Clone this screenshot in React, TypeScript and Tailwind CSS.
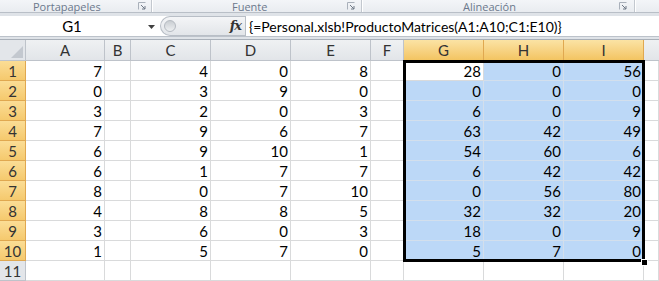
import React from 'react'

const rows: Array<{ a: number; c: number; d: number; e: number; g: number; h: number; i: number }> = [
  { a: 7, c: 4, d: 0, e: 8, g: 28, h: 0, i: 56 },
  { a: 0, c: 3, d: 9, e: 0, g: 0, h: 0, i: 0 },
  { a: 3, c: 2, d: 0, e: 3, g: 6, h: 0, i: 9 },
  { a: 7, c: 9, d: 6, e: 7, g: 63, h: 42, i: 49 },
  { a: 6, c: 9, d: 10, e: 1, g: 54, h: 60, i: 6 },
  { a: 6, c: 1, d: 7, e: 7, g: 6, h: 42, i: 42 },
  { a: 8, c: 0, d: 7, e: 10, g: 0, h: 56, i: 80 },
  { a: 4, c: 8, d: 8, e: 5, g: 32, h: 32, i: 20 },
  { a: 3, c: 6, d: 0, e: 3, g: 18, h: 0, i: 9 },
  { a: 1, c: 5, d: 7, e: 0, g: 5, h: 7, i: 0 },
]

const cols = ['A', 'B', 'C', 'D', 'E', 'F', 'G', 'H', 'I']
const selectedCols = ['G', 'H', 'I']

function Launcher() {
  return (
    <svg width="8" height="8" viewBox="0 0 8 8" className="shrink-0">
      <path d="M0.5 7.5V0.5H7.5" fill="none" stroke="#a9b0ba" />
      <path d="M3 3L7 7M7 4V7H4" fill="none" stroke="#6f7886" />
    </svg>
  )
}

function Cell({ value, blue, active }: { value?: number; blue?: boolean; active?: boolean }) {
  return (
    <div
      className={
        'h-5 flex items-center justify-end pr-[2px] pt-[2px] border-r border-b ' +
        (blue && !active ? 'bg-[#bcd8f7] border-[#d3dfec]' : 'bg-white border-[#d9dadb]')
      }
    >
      {value !== undefined ? value : ''}
    </div>
  )
}

export default function App() {
  return (
    <div className="w-[659px] h-[281px] overflow-hidden bg-white text-black font-['Lato','Open_Sans',sans-serif]">
      {/* Ribbon group labels */}
      <div className="h-[13px] flex bg-gradient-to-b from-[#f3f5f8] to-[#e9ecf0] border-b border-[#b9bfc7] text-[11px] leading-[13px] text-[#6b788c] font-['Open_Sans',sans-serif]">
        <div className="w-[152px] flex items-start justify-between pl-[33px] pr-[5px] border-r border-[#c3c8cf]">
          <span>Portapapeles</span>
          <div className="mt-[2px]"><Launcher /></div>
        </div>
        <div className="w-[210px] flex items-start justify-between pl-[79px] pr-[6px] border-l border-white border-r border-r-[#c3c8cf]">
          <span>Fuente</span>
          <div className="mt-[2px]"><Launcher /></div>
        </div>
        <div className="w-[273px] flex items-start justify-between pl-[100px] pr-[7px] border-l border-white border-r border-r-[#c3c8cf]">
          <span>Alineación</span>
          <div className="mt-[2px]"><Launcher /></div>
        </div>
        <div className="flex-1 border-l border-white" />
      </div>

      {/* Formula bar */}
      <div className="h-[27px] bg-[#dfe3e8] pt-[3px] border-b border-[#a9b0b9]">
        <div className="h-[21px] flex bg-white border-b border-[#bcc2ca]">
          <div className="w-[160px] flex items-center relative">
            <span className="w-[144px] text-center text-[15px] pt-[1px]">G1</span>
            <svg width="8" height="5" viewBox="0 0 8 5" className="absolute left-[148px] top-[9px]">
              <path d="M0 0H7L3.5 4Z" fill="#404040" />
            </svg>
          </div>
          <div className="w-[85px] flex items-center justify-between bg-gradient-to-b from-[#f4f5f7] to-[#e2e5e9] rounded-l-[11px] border border-r-0 border-[#b8bec6] pl-[3px] pr-[4px]">
            <div className="w-[12px] h-[12px] rounded-full bg-gradient-to-b from-[#c9cdd2] to-[#eef0f2] border border-[#b5bac1]" />
            <span className="font-['DejaVu_Serif',serif] italic font-bold text-[13px] text-[#333] tracking-[-1px]">fx</span>
          </div>
          <div className="flex-1 flex items-center pl-[3px] text-[14px] pt-[1px] border-l border-[#b8bec6] whitespace-nowrap">
            {'{=Personal.xlsb!ProductoMatrices(A1:A10;C1:E10)}'}
          </div>
        </div>
      </div>

      {/* Sheet */}
      <div className="relative text-[15px]">
        <div className="grid grid-cols-[26px_79px_26px_80px_80px_80px_33px_80px_80px_80px_15px]">
          {/* corner */}
          <div className="h-[21px] bg-[#e3e6ea] border-r border-b border-[#bec3ca] relative">
            <svg width="12" height="12" viewBox="0 0 12 12" className="absolute right-[2px] bottom-[2px]">
              <path d="M12 0V12H0Z" fill="#c3c8cf" />
            </svg>
          </div>
          {cols.map(c =>
            selectedCols.includes(c) ? (
              <div
                key={c}
                className="h-[21px] flex items-center justify-center bg-gradient-to-b from-[#fbe3a4] to-[#f3c461] border-r border-b border-[#e0a850] text-[#333]"
              >
                {c}
              </div>
            ) : (
              <div
                key={c}
                className="h-[21px] flex items-center justify-center bg-gradient-to-b from-[#eff1f3] to-[#e2e5e9] border-r border-b border-[#bec3ca] text-[#333]"
              >
                {c}
              </div>
            )
          )}
          <div className="h-[21px] bg-gradient-to-b from-[#eff1f3] to-[#e2e5e9] border-b border-[#bec3ca]" />

          {rows.map((r, idx) => (
            <React.Fragment key={idx}>
              <div className="h-5 flex items-center justify-center pt-[1px] bg-gradient-to-b from-[#fbdd95] to-[#f5c96d] border-r border-b border-[#e0a850] text-[#333]">
                {idx + 1}
              </div>
              <Cell value={r.a} />
              <Cell />
              <Cell value={r.c} />
              <Cell value={r.d} />
              <Cell value={r.e} />
              <Cell />
              <Cell value={r.g} blue active={idx === 0} />
              <Cell value={r.h} blue />
              <Cell value={r.i} blue />
              <Cell />
            </React.Fragment>
          ))}

          <div className="h-5 flex items-center justify-center pt-[1px] bg-[#e3e6ea] border-r border-b border-[#bec3ca] text-[#333]">
            11
          </div>
          {Array.from({ length: 10 }).map((_, i) => (
            <Cell key={i} />
          ))}
        </div>

        {/* selection border */}
        <div className="absolute left-[403px] top-[20px] w-[242px] h-[202px] border-[3px] border-black pointer-events-none" />
        <div className="absolute left-[641px] top-[219px] w-[7px] h-[7px] bg-black border border-white" />
      </div>
    </div>
  )
}
